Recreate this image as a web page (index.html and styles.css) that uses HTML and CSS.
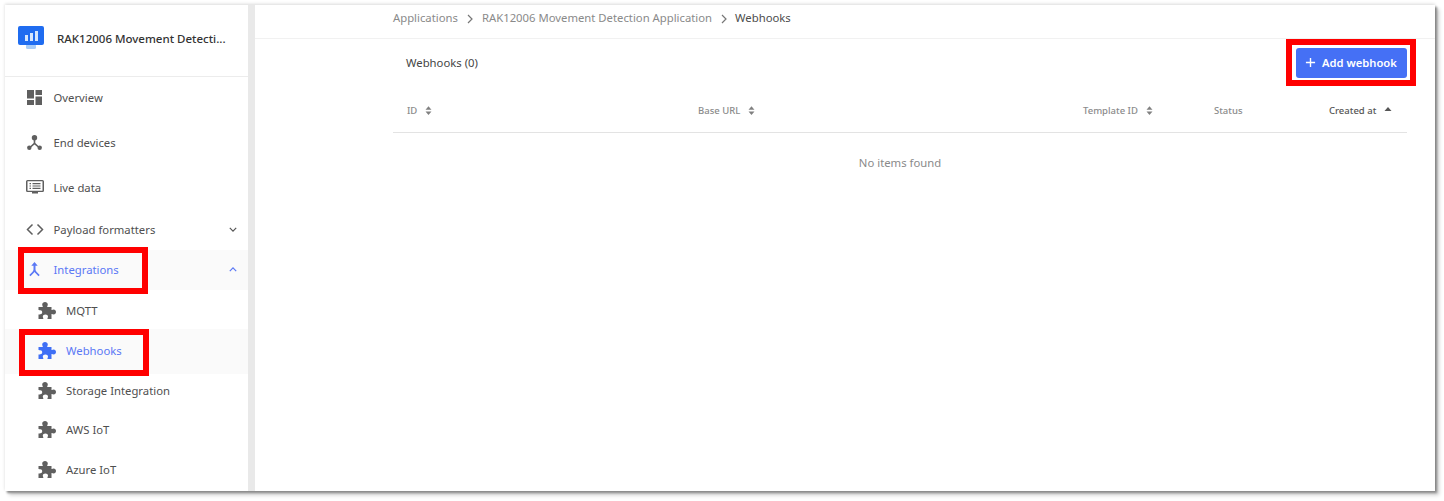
FILE: index.html
```html
<!DOCTYPE html>
<html lang="en">
<head>
  <meta charset="UTF-8" />
  <title>Webhooks</title>
  <link rel="stylesheet" href="styles.css">
</head>
<body>
  <svg class="sprites" aria-hidden="true">
    <symbol id="puzzle" viewBox="0 0 18 17">
      <path d="M.5 5H4.800C5 4 4.200 3.600 4.200 2.400 4.200 1 5.500 0 7 0s2.800 1 2.800 2.400C9.800 3.600 9 4 9.200 5H13.500V8C14.200 8.400 14.800 7.600 15.700 7.600 17 7.600 18 8.700 18 10s-1 2.400-2.300 2.400C14.800 12.400 14.200 11.600 13.500 12V17H9.500C9.300 16 10 15.600 10 14.600 10 13.400 8.800 12.600 7.400 12.600S4.800 13.400 4.800 14.600C4.800 15.600 5.500 16 5.300 17H.5V12.500C1.300 12.700 1.600 12.200 2.400 12.200 3.500 12.200 4.200 11.300 4.200 10.200S3.500 8.200 2.400 8.200C1.600 8.200 1.300 7.800.5 8z"/>
    </symbol>
    <symbol id="sort" viewBox="0 0 8 10">
      <path d="M4 0l3.400 4H.6zM4 10L.6 6h6.800z"/>
    </symbol>
  </svg>

  <div class="frame">
    <aside class="sidebar">
      <div class="app-head">
        <svg class="app-logo" viewBox="0 0 26 24">
          <rect x="8" y="18" width="10" height="5" rx="1.500" fill="#a9cdf8"/>
          <rect width="26" height="19" rx="2" fill="#1f6cf0"/>
          <rect x="7" y="9" width="3" height="6" fill="#d5e6fd"/>
          <rect x="12" y="7" width="3" height="8" fill="#d5e6fd"/>
          <rect x="17" y="5" width="3" height="10" fill="#d5e6fd"/>
        </svg>
        <span class="app-name">RAK12006 Movement Detecti...</span>
      </div>

      <nav class="menu">
        <a class="item">
          <svg class="icon" viewBox="0 0 15 15"><path d="M0 0h7v8.500H0zM8.500 0H15v5H8.500zM8.500 6.500H15V15H8.500zM0 10h7v5H0z"/></svg>
          Overview
        </a>
        <a class="item flat">
          <svg class="icon" viewBox="0 0 15 15"><circle cx="7.500" cy="2.800" r="2.700"/><path d="M6.700 4h1.600v4l4 3.700-1 1.100L7.500 9.400l-3.800 3.400-1-1.100 4-3.700z"/><circle cx="2.300" cy="12.800" r="2.200"/><circle cx="12.700" cy="12.800" r="2.200"/></svg>
          End devices
        </a>
        <a class="item flat">
          <svg class="icon icon-wide" viewBox="0 0 18 15"><path fill-rule="evenodd" d="M1.500 0h15A1.500 1.500 0 0 1 18 1.500v9a1.500 1.500 0 0 1-1.500 1.500H12v1.500H6V12H1.500A1.500 1.500 0 0 1 0 10.500v-9A1.500 1.500 0 0 1 1.500 0zm0 1.300v9.400h15V1.300z"/><path d="M3.500 3H5v1.200H3.500zM6.500 3h8v1.200h-8zM3.500 5.400H5v1.200H3.500zM6.500 5.400h8v1.200h-8zM3.500 7.800H5V9H3.500zM6.500 7.800h8V9h-8z"/></svg>
          Live data
        </a>
        <a class="item">
          <svg class="icon icon-wide line" viewBox="0 0 18 15"><path d="M6.500 2.500L1.500 7.500l5 5M11.500 2.500l5 5-5 5"/></svg>
          Payload formatters
          <svg class="chev" viewBox="0 0 10 6"><path d="M1 1l4 4 4-4"/></svg>
        </a>
        <a class="item open">
          <svg class="icon" viewBox="0 0 15 15"><path d="M7.500 0l3.200 3.800H8.500v3.700c0 1 .4 1.700 1.200 2.500l3 3-1.200 1.300-3.100-3.200c-.4-.4-.7-.8-.9-1.300-.2.500-.5.900-.9 1.300L3.500 14.300 2.300 13l3-3c.8-.8 1.200-1.500 1.200-2.500V3.800H4.300z"/></svg>
          Integrations
          <svg class="chev" viewBox="0 0 10 6"><path d="M1 5l4-4 4 4"/></svg>
        </a>
        <a class="item sub lower"><svg class="puzzle"><use href="#puzzle"/></svg>MQTT</a>
        <a class="item sub current"><svg class="puzzle"><use href="#puzzle"/></svg>Webhooks</a>
        <a class="item sub"><svg class="puzzle"><use href="#puzzle"/></svg>Storage Integration</a>
        <a class="item sub"><svg class="puzzle"><use href="#puzzle"/></svg>AWS IoT</a>
        <a class="item sub"><svg class="puzzle"><use href="#puzzle"/></svg>Azure IoT</a>
      </nav>
    </aside>

    <main class="content">
      <div class="crumbs">
        <span>Applications</span>
        <svg class="crumb-sep" viewBox="0 0 6 10"><path d="M1 1l4 4-4 4"/></svg>
        <span>RAK12006 Movement Detection Application</span>
        <svg class="crumb-sep" viewBox="0 0 6 10"><path d="M1 1l4 4-4 4"/></svg>
        <span class="crumb-here">Webhooks</span>
      </div>

      <div class="panel">
        <div class="panel-top">
          <span class="panel-title">Webhooks (0)</span>
          <button class="add-btn">
            <svg viewBox="0 0 12 12"><path d="M6 1v10M1 6h10"/></svg>
            Add webhook
          </button>
        </div>

        <div class="table-head">
          <span class="col">ID <svg class="sort"><use href="#sort"/></svg></span>
          <span class="col">Base URL <svg class="sort"><use href="#sort"/></svg></span>
          <span class="col">Template ID <svg class="sort"><use href="#sort"/></svg></span>
          <span class="col">Status</span>
          <span class="col sorted">Created at <svg class="sort-up" viewBox="0 0 8 4"><path d="M4 0l3.500 4H.5z"/></svg></span>
        </div>
        <div class="empty">No items found</div>
      </div>
    </main>
  </div>

  <!-- annotation boxes drawn over the screenshot -->
  <div class="mark mark-integrations"></div>
  <div class="mark mark-webhooks"></div>
  <div class="mark mark-add"></div>
</body>
</html>
```

FILE: styles.css
```css
* {
  box-sizing: border-box;
}
html, body {
  height: 100%;
}
body {
  margin: 0;
  padding: 5px 9px 10px 5px;
  background: #fff;
  font-family: "Noto Sans", sans-serif;
  font-size: 11.3px;
  color: #4a4a4a;
  overflow: hidden;
  position: relative;
}
.sprites {
  display: none;
}

.frame {
  display: flex;
  height: 486px;
  background: #fff;
  box-shadow: 0 -1px 3px rgba(0, 0, 0, 0.15), 2px 2px 2px #8f8f8f, 4px 4px 4px rgba(0, 0, 0, 0.2);
}

/* Sidebar */
.sidebar {
  width: 250px;
  flex-shrink: 0;
  border-right: 7px solid #e9e9e9;
  overflow: hidden;
}
.app-head {
  display: flex;
  align-items: center;
  height: 72px;
  padding: 0 0 6px 13px;
  border-bottom: 1px solid #ececec;
}
.app-logo {
  width: 26px;
  height: 24px;
  margin-right: 13px;
}
.app-name {
  margin-top: 2px;
  font-size: 11.5px;
  font-weight: 500;
  color: #333;
}

.menu {
  display: grid;
  grid-template-rows: 43px 45px 45px 40px 40px 39px 45px 34px 44px 36px;
}
.item {
  display: flex;
  align-items: center;
  padding: 0 0 2px 20px;
  color: #4f4f4f;
}
.item.flat {
  padding-bottom: 0;
}
.item.open {
  background: #fafafa;
  color: #5a78f5;
}
.item.sub {
  padding-left: 33px;
}
.item.lower {
  padding-top: 4px;
}
.item.current {
  background: #fafafa;
  color: #5a78f5;
}
.icon {
  width: 15px;
  height: 15px;
  margin: 0 11.5px 0 2px;
  fill: #5f5f5f;
}
.icon-wide {
  width: 18px;
  margin: 0 10px 0 .5px;
}
.icon.line {
  fill: none;
  stroke: #5f5f5f;
  stroke-width: 1.500;
}
.open .icon {
  fill: #5a78f5;
}
.chev {
  width: 8px;
  height: 5px;
  margin-left: auto;
  margin-right: 11px;
  fill: none;
  stroke: #555;
  stroke-width: 1.500;
}
.open .chev {
  stroke: #5a78f5;
}
.puzzle {
  width: 18px;
  height: 17px;
  margin-right: 10px;
  fill: #5f5f5f;
}
.current .puzzle {
  fill: #3f6ff5;
}

/* Main area */
.content {
  flex: 1;
  min-width: 0;
}
.crumbs {
  display: flex;
  align-items: center;
  height: 34px;
  padding: 0 0 8px 138px;
  border-bottom: 1px solid #f1f1f1;
  color: #8a8a8a;
}
.crumb-sep {
  width: 6px;
  height: 10px;
  margin: 2px 8px 0 9px;
  fill: none;
  stroke: #777;
  stroke-width: 1.200;
}
.crumb-sep:first-of-type {
  margin-right: 9px;
}
.crumb-here {
  color: #4d4d4d;
  margin-top: -1px;
}
.panel {
  padding: 0 28px 0 138px;
}
.panel-top {
  display: flex;
  justify-content: space-between;
  align-items: center;
  height: 47px;
  padding: 0 0 0 13px;
}
.panel-title {
  color: #454545;
}
.add-btn {
  display: flex;
  align-items: center;
  gap: 6px;
  width: 111px;
  height: 30px;
  padding: 0 0 0 9px;
  border: none;
  border-radius: 3px;
  background: #4570f5;
  color: #fff;
  font-family: inherit;
  font-size: 11.2px;
  font-weight: 600;
}
.add-btn svg {
  width: 11px;
  height: 11px;
  fill: none;
  stroke: #fff;
  stroke-width: 1.500;
}

.table-head {
  display: grid;
  grid-template-columns: 291px 385px 131px 115px 78px;
  align-items: center;
  height: 47px;
  padding: 2px 0 0 14px;
  border-bottom: 1px solid #e3e3e3;
  font-size: 9.5px;
  font-weight: 500;
  color: #8b8b8b;
}
.col {
  display: flex;
  align-items: center;
  gap: 8px;
}
.sorted {
  color: #555;
}
.sort {
  width: 7px;
  height: 9px;
  fill: #808080;
}
.sort-up {
  width: 8px;
  height: 4px;
  margin-bottom: 2px;
  fill: #555;
}
.empty {
  padding-top: 22px;
  text-align: center;
  color: #8a8a8a;
}

/* Red annotation boxes */
.mark {
  position: absolute;
  width: 130px;
  height: 47px;
  border: 6px solid #f00;
}
.mark-integrations {
  left: 18px;
  top: 247px;
}
.mark-webhooks {
  left: 19px;
  top: 329px;
}
.mark-add {
  left: 1286px;
  top: 39px;
}
```
